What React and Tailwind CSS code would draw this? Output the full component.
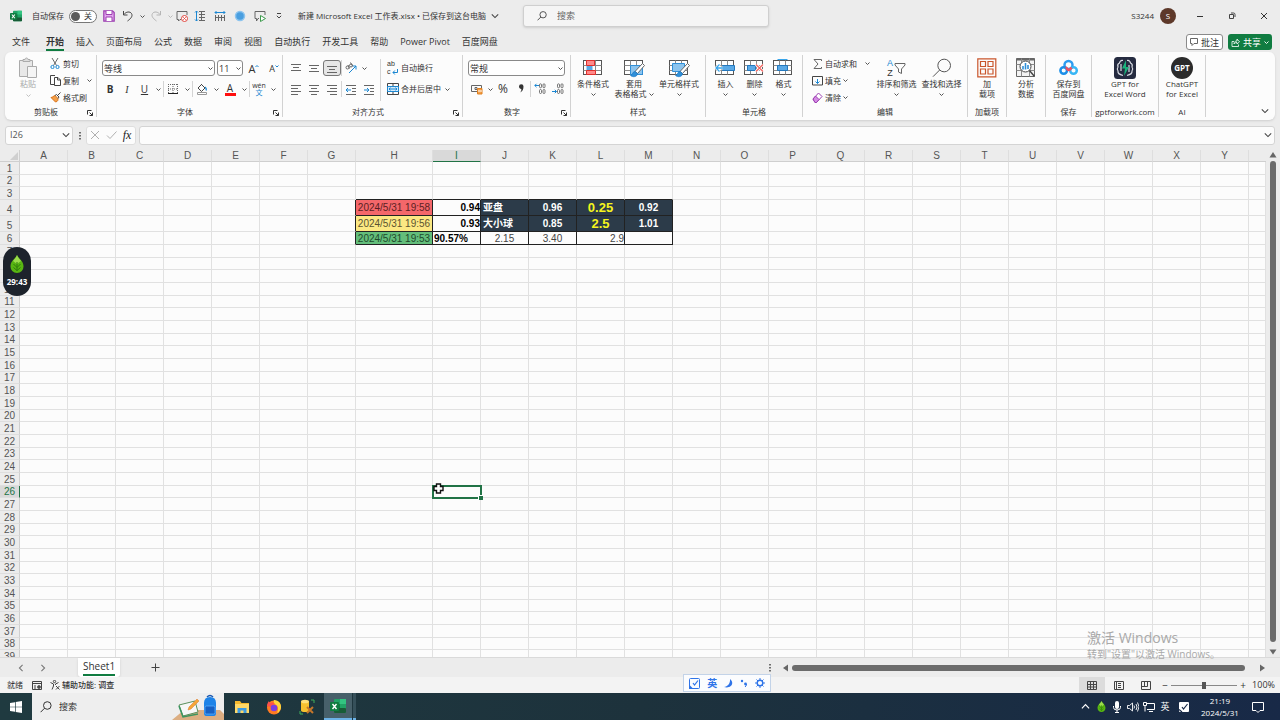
/**
 * Spreadsheet window — title bar, ribbon, formula bar, cell grid,
 * sheet tabs and status bar, with the desktop taskbar underneath.
 */

const UI_FONT = "font-['Open_Sans','Noto_Sans_CJK_SC',sans-serif]";
const CELL_FONT = "font-['Liberation_Sans','Noto_Sans_CJK_SC',sans-serif]";

const TABS = [
  "开始", "插入", "页面布局", "公式", "数据", "审阅", "视图",
  "自动执行", "开发工具", "帮助", "Power Pivot", "百度网盘",
];

const COLUMNS = "ABCDEFGHIJKLMNOPQRSTUVWXY".split("");
const ROWS = Array.from({ length: 39 }, (_, i) => i + 1);

const DARK = "bg-[#2c3b49] text-white font-bold text-center";

const CELLS = {
  H4: { text: "2024/5/31 19:58", style: "bg-[#f4676a] text-[#5a1f22] text-center" },
  I4: { text: "0.94", style: "text-black font-bold text-right" },
  J4: { text: "亚盘", style: "bg-[#2c3b49] text-white font-bold pl-[2px]" },
  K4: { text: "0.96", style: DARK },
  L4: { text: "0.25", style: "bg-[#2c3b49] text-[#f5f51d] font-bold text-center text-[13px]" },
  M4: { text: "0.92", style: DARK },
  H5: { text: "2024/5/31 19:56", style: "bg-[#fce883] text-[#5b5330] text-center" },
  I5: { text: "0.93", style: "text-black font-bold text-right" },
  J5: { text: "大小球", style: "bg-[#2c3b49] text-white font-bold pl-[2px]" },
  K5: { text: "0.85", style: DARK },
  L5: { text: "2.5", style: "bg-[#2c3b49] text-[#f5f51d] font-bold text-center text-[13px]" },
  M5: { text: "1.01", style: DARK },
  H6: { text: "2024/5/31 19:53", style: "bg-[#63be7b] text-[#1e4a2c] text-center" },
  I6: { text: "90.57%", style: "text-black font-bold pl-px" },
  J6: { text: "2.15", style: "text-[#444] text-center" },
  K6: { text: "3.40", style: "text-[#444] text-center" },
  L6: { text: "2.9", style: "text-[#444] text-right" },
  M6: { text: "", style: "" },
};

/* ── Small shared pieces ─────────────────────── */

function Svg({ w = 12, h = 12, box, className = "", children }) {
  return (
    <svg
      width={w}
      height={h}
      viewBox={box || `0 0 ${w} ${h}`}
      fill="none"
      stroke="#666"
      strokeWidth="1"
      className={`shrink-0 ${className}`}
      aria-hidden="true"
    >
      {children}
    </svg>
  );
}

function Chevron({ size = 5, color = "#444", className = "" }) {
  return (
    <svg width={size} height={size} viewBox="0 0 6 6" fill="none" className={`shrink-0 ${className}`} aria-hidden="true">
      <path d="M.6 1.8 3 4.2l2.4-2.4" stroke={color} strokeWidth={size > 6 ? 0.8 : 1.1} />
    </svg>
  );
}

function Drop({ label, className = "w-3" }) {
  return (
    <button aria-label={label} className={`flex h-4 items-center justify-center ${className}`}>
      <Chevron />
    </button>
  );
}

function IconButton({ label, className = "w-[18px]", children }) {
  return (
    <button aria-label={label} className={`flex h-4 shrink-0 items-center justify-center ${className}`}>
      {children}
    </button>
  );
}

function Divider() {
  return <span className="h-4 w-px shrink-0 bg-[#d4d4d4]" />;
}

function Combo({ label, value, className }) {
  return (
    <span className={`relative block ${className}`}>
      <select
        aria-label={label}
        className="block h-4 w-full appearance-none rounded-[3px] border border-[#8a8a8a] bg-white px-px text-[9px] leading-none text-[#333]"
      >
        <option>{value}</option>
      </select>
      <Chevron className="pointer-events-none absolute right-[2px] top-[6px]" />
    </span>
  );
}

function Group({ label, launcher, className, children }) {
  return (
    <section className={`flex h-[62px] shrink-0 flex-col border-r border-[#d2d2d2] ${className}`}>
      <div className="flex h-[51px] items-start">{children}</div>
      <div className="flex h-[11px] items-center">
        <span className="flex-1 whitespace-nowrap text-center text-[8px] leading-[11px]">{label}</span>
        {launcher && (
          <button aria-label={`${label}设置`} className="w-[9px] pt-[3px]">
            <Svg w={6} h={6}>
              <path d="M.5 4.500v-4h4M2.500 2.500l3 3M5.500 2.500v3h-3" stroke="#333" />
            </Svg>
          </button>
        )}
      </div>
    </section>
  );
}

function BigButton({ icon, lines, drop, dropInline, className }) {
  return (
    <button className={`flex shrink-0 flex-col items-center pt-[2px] text-[8px] leading-[10px] ${className}`}>
      <span className="flex h-[22px] items-center justify-center">{icon}</span>
      {lines.map((line, i) => (
        <span key={line} className="flex items-center gap-[2px] whitespace-nowrap">
          {line}
          {dropInline && i === lines.length - 1 && <Chevron />}
        </span>
      ))}
      {drop && <Chevron className="mt-[3px]" />}
    </button>
  );
}

function RowButton({ icon, text, drop, gap = "gap-[2px]" }) {
  return (
    <button className="flex h-[17px] items-center gap-[2px] whitespace-nowrap">
      <span className="flex w-3 justify-center">{icon}</span>
      <span className={`flex items-center ${gap}`}>
        {text}
        {drop && <Chevron />}
      </span>
    </button>
  );
}

/* ── Icons ───────────────────────────────────── */

function ExcelIcon({ w = 12 }) {
  return (
    <Svg w={w} h={w} box="0 0 16 16">
      <g stroke="none">
        <rect x="4" y="1" width="12" height="14" rx="1" fill="#21a366" />
        <rect x="10" y="1" width="6" height="5" fill="#33c481" />
        <rect x="4" y="6" width="6" height="5" fill="#107c41" />
        <rect x="4" y="10" width="12" height="5" rx="1" fill="#185c37" />
        <rect x="0" y="4" width="9" height="9" rx="1" fill="#107c41" />
      </g>
      <path d="m2.5 6 4 5m0-5-4 5" stroke="#fff" strokeWidth="1.4" />
    </Svg>
  );
}

function SearchIcon({ size = 12, color = "#555" }) {
  return (
    <Svg w={size} h={size} box="0 0 12 12">
      <circle cx="7.3" cy="4.5" r="3.8" stroke={color} vectorEffect="non-scaling-stroke" />
      <path d="M4.6 7.2.6 11.2" stroke={color} vectorEffect="non-scaling-stroke" />
    </Svg>
  );
}

function AlignIcon({ rows, align = "center" }) {
  const short = { left: [1, 8], center: [3, 9], right: [4, 11] }[align];
  return (
    <Svg w={12} h={11}>
      {rows.map((y, i) => (
        <path key={y} d={i % 2 ? `M${short[0]} ${y}.5h${short[1] - short[0]}` : `M1 ${y}.5h10`} />
      ))}
    </Svg>
  );
}

function IndentIcon({ d }) {
  return (
    <Svg w={12} h={11}>
      <path d="M1 1.5h10M7 4.5h4M7 7.5h4M1 10.5h10" />
      <path d={d} stroke="#1b87d2" />
    </Svg>
  );
}

function GridBase({ children }) {
  return (
    <Svg w={21} h={19}>
      <rect x=".5" y="1.5" width="18" height="14" fill="#fff" stroke="#555" />
      <path d="M6.500 1.500v14M12.500 1.500v14M.5 6.500h18M.5 11.500h18" stroke="#8a8a8a" />
      {children}
    </Svg>
  );
}

const BRUSH = (
  <g>
    <path d="M18.500 4.500 20.500 6.500 13.500 14.500 11 12.500z" fill="#fff" stroke="#666" />
    <path d="M11 12.500c-2.500 0-2 3-4.500 4 2 2 7 1.500 7-2z" fill="#2f8fd8" stroke="#1b78c4" strokeWidth=".7" />
  </g>
);

function DigitsIcon({ arrow }) {
  return (
    <Svg w={12} h={12}>
      <g strokeWidth=".9">
        <rect x="5.5" y=".8" width="2" height="4" rx="1" />
        <rect x="9" y=".8" width="2" height="4" rx="1" />
        <rect x="5.5" y="6.5" width="2" height="4" rx="1" />
        <rect x="9" y="6.5" width="2" height="4" rx="1" />
      </g>
      <path d={arrow} stroke="#1b87d2" />
    </Svg>
  );
}

function LeafIcon({ w, h }) {
  return (
    <Svg w={w} h={h} box="0 0 14 18">
      <path d="M7 0c1 3 6.500 6 6.500 11A6.500 6.500 0 0 1 7 18 6.500 6.500 0 0 1 .5 11C.5 6 6 3 7 0z" fill="#58b512" stroke="none" />
      <path d="M7 0c1 3 3 4 4 6L7 9 3 6c1-2 3-3 4-6z" fill="#9bdb4b" stroke="none" />
      <path d="M7 7v9M3.500 9 7 12.500 10.500 9M3.500 12.500 7 15.500l3.500-3" stroke="#2f7d0a" />
    </Svg>
  );
}

/* ── Title bar ───────────────────────────────── */

function TitleBar() {
  return (
    <header className="flex h-8 shrink-0 items-center text-[8px]">
      <div className="flex items-center pl-[10px]">
        <ExcelIcon />
        <label className="ml-[10px] flex items-center gap-[5px] whitespace-nowrap">
          自动保存
          <span className="relative flex h-[13px] w-7 items-center rounded-full border border-[#777] bg-white">
            <input type="checkbox" className="absolute inset-0 appearance-none" />
            <span className="ml-px size-[9px] rounded-full bg-[#5c5c5c]" />
            <span className="ml-1">关</span>
          </span>
        </label>
      </div>
      <div className="flex items-center pl-[3px]">
        <IconButton label="保存">
          <Svg>
            <path d="M.8.8h8.700l1.700 1.700v8.700H.8z" fill="#e3a5ee" stroke="#9b3fb0" strokeWidth="1.2" />
            <path d="M3 1v3.500h6V1" fill="#fff" stroke="#9b3fb0" />
            <path d="M3 11V7h6v4" fill="#fff" stroke="#9b3fb0" />
          </Svg>
        </IconButton>
        <IconButton label="撤消" className="w-5">
          <Svg>
            <path d="M1.500 1v4h4M1.700 4.700C4 1.500 8 1.200 9.500 3.500c1.500 2.500-.5 5-4 7.500" stroke="#444" />
          </Svg>
        </IconButton>
        <Drop label="撤消列表" className="w-2" />
        <IconButton label="恢复" className="w-5">
          <Svg>
            <path d="M10.500 1v4h-4M10.300 4.700C8 1.500 4 1.200 2.500 3.500 1 6 3 8.500 6.500 11" stroke="#b5b5b5" />
          </Svg>
        </IconButton>
        <IconButton label="恢复列表" className="w-2">
          <Chevron color="#b5b5b5" />
        </IconButton>
        <IconButton label="删除批注" className="w-4">
          <Svg>
            <path d="M5 9.500H4L2.500 11V9.500H1v-8h10V5" />
            <circle cx="8.500" cy="8.500" r="3" fill="#fff" stroke="#e0443c" />
            <path d="m7.300 7.300 2.400 2.400m0-2.400L7.300 9.700" stroke="#e0443c" />
          </Svg>
        </IconButton>
        <IconButton label="行高" className="w-5">
          <Svg>
            <path d="M2.500 1v10M1 2.500 2.500 1 4 2.500M1 9.500 2.500 11 4 9.500" stroke="#1b87d2" />
            <path d="M5 1.500h6M5 4.500h6M5 7.500h6M5 10.500h6M7.500 1.500v9" />
          </Svg>
        </IconButton>
        <IconButton label="列宽" className="w-5">
          <Svg>
            <path d="M1 2.500h10M2.500 1 1 2.500 2.500 4M9.500 1 11 2.500 9.500 4" stroke="#1b87d2" />
            <path d="M1.500 5v6M4.500 5v6M7.500 5v6M10.500 5v6M1.500 7.500h9" />
          </Svg>
        </IconButton>
        <IconButton label="形状" className="w-5">
          <Svg>
            <circle cx="6" cy="6" r="4.500" fill="#4a9fe0" stroke="#8dc4ee" strokeWidth="1.500" />
          </Svg>
        </IconButton>
        <IconButton label="演示" className="w-5">
          <Svg>
            <path d="M5 8.500H4L2.500 11V8.500H1v-7h10V5" />
            <path d="m6.500 5.500 5 3-5 3z" fill="#fff" stroke="#3b9a4b" />
          </Svg>
        </IconButton>
        <IconButton label="自定义快速访问工具栏">
          <Svg w={6} h={6}>
            <path d="M1 .5h4M.8 2.800 3 5l2.200-2.200" stroke="#444" />
          </Svg>
        </IconButton>
      </div>
      <button className="ml-[10px] flex items-center gap-[5px] whitespace-nowrap">
        新建 Microsoft Excel 工作表.xlsx • 已保存到这台电脑
        <Chevron size={8} />
      </button>
      <label className="ml-6 flex h-[22px] w-[246px] items-center gap-[10px] rounded-[3px] border border-[#cfcfcf] bg-[#f5f5f5] pl-[13px] shadow-sm">
        <SearchIcon size={10} />
        <input
          type="text"
          placeholder="搜索"
          className="min-w-0 flex-1 bg-transparent text-[9px] outline-none placeholder:text-[#666]"
        />
      </label>
      <div className="ml-auto flex items-center">
        <span className="text-[8px]">S3244</span>
        <button className="ml-[6px] flex size-4 items-center justify-center rounded-full bg-[#5d3829] text-[8px] text-white">
          S
        </button>
        <IconButton label="最小化" className="ml-2 w-8">
          <Svg w={8} h={8}>
            <path d="M1 4.500h6" stroke="#333" />
          </Svg>
        </IconButton>
        <IconButton label="还原" className="w-8">
          <Svg w={8} h={8}>
            <path d="M1.500 2.500h4v4h-4zM3 1h2.500Q7 1 7 2.500V5" stroke="#444" />
          </Svg>
        </IconButton>
        <IconButton label="关闭" className="w-8">
          <Svg w={8} h={8}>
            <path d="m1 1 6 6m0-6L1 7" stroke="#333" />
          </Svg>
        </IconButton>
      </div>
    </header>
  );
}

function TabBar() {
  return (
    <nav className="flex h-5 shrink-0 items-center pl-3 text-[9px]">
      <button className="mr-4">文件</button>
      <div className="flex h-full items-center gap-3">
        {TABS.map((tab, i) => (
          <button
            key={tab}
            className={`h-[18px] whitespace-nowrap border-b-2 pt-[2px] ${
              i === 0 ? "border-[#107c41] font-bold" : "border-transparent"
            }`}
          >
            {tab}
          </button>
        ))}
      </div>
      <button className="ml-auto flex h-4 items-center gap-[3px] rounded-[3px] border border-[#8a8a8a] bg-white px-[3px] leading-none">
        <Svg w={8} h={8}>
          <path d="M.5 .5h7v5H4L2 7.500v-2H.5z" />
        </Svg>
        批注
      </button>
      <button className="ml-[5px] mr-2 flex h-4 items-center gap-[3px] rounded-[3px] bg-[#107c41] px-[3px] leading-none text-white">
        <Svg w={9} h={9}>
          <path d="M3 3.500H1v5h6.500v-2M3 6c0-2 1-3 3-3V1l2.500 2.800L6 6V4.500C4.500 4.500 3.500 5 3 6z" stroke="#fff" strokeWidth=".8" />
        </Svg>
        共享
        <Chevron color="#fff" />
      </button>
    </nav>
  );
}

/* ── Ribbon ──────────────────────────────────── */

function ClipboardGroup() {
  return (
    <Group label="剪贴板" launcher className="w-[92px] text-[8px]">
      <button className="ml-3 flex w-[22px] flex-col items-center pt-[2px] leading-[10px] text-[#aaa]">
        <Svg w={20} h={22}>
          <path d="M1.500 3.500h13v16h-13z" fill="#e8e8e8" stroke="#aaa" />
          <path d="M5 4.500v-2h2c0-2 3-2 3 0h2v2z" fill="#ddd" stroke="#aaa" />
          <path d="M9.500 9.500h9v11h-9z" fill="#f5f5f5" stroke="#aaa" />
        </Svg>
        粘贴
        <Chevron color="#bbb" className="mt-1" />
      </button>
      <div className="ml-[10px] flex flex-col">
        <RowButton
          text="剪切"
          icon={
            <Svg w={10} h={11}>
              <path d="m2 0 4.500 7.500M8 0 3.500 7.500" />
              <circle cx="2.500" cy="9" r="1.600" stroke="#1b87d2" />
              <circle cx="7.500" cy="9" r="1.600" stroke="#1b87d2" />
            </Svg>
          }
        />
        <RowButton
          text="复制"
          drop
          gap="gap-2"
          icon={
            <Svg w={11} h={11}>
              <path d="M4 9.500H.5v-9H5" stroke="#444" />
              <path d="M4.500 2.500h3.500l2.500 2.500v5.500h-6zM7.500 2.500V5h3" fill="#fff" stroke="#444" />
            </Svg>
          }
        />
        <RowButton
          text="格式刷"
          icon={
            <Svg w={11} h={11}>
              <path d="M1 5.500 5.500 10C8 9.500 8 8 8 6.500L5 3.500C3.500 4 2.500 5.500 1 5.500z" fill="#f3a04a" stroke="#d9731a" />
              <path d="m5 3.500 1.500-1 2.500 2.500-1 1.500M7.500 3.500l3-3" stroke="#444" />
            </Svg>
          }
        />
      </div>
    </Group>
  );
}

function FontGroup() {
  return (
    <Group label="字体" launcher className="w-[186px]">
      <div className="pl-[5px] pt-[5px]">
        <div className="flex h-4 items-center gap-[2px]">
          <Combo label="字体名称" value="等线" className="w-[113px]" />
          <Combo label="字号" value="11" className="w-[26px]" />
          <IconButton label="增大字号">
            <span className="text-[11px] leading-none">A</span>
            <Svg w={4} h={8}>
              <path d="M.5 3 2 1.500 3.500 3" stroke="#1b87d2" />
            </Svg>
          </IconButton>
          <IconButton label="减小字号">
            <span className="text-[9px] leading-none">A</span>
            <Svg w={4} h={8}>
              <path d="M.5 1.500 2 3l1.500-1.500" stroke="#1b87d2" />
            </Svg>
          </IconButton>
        </div>
        <div className="mt-[5px] flex h-4 items-center text-[10px]">
          <button className="w-4 font-bold">B</button>
          <button className="w-[18px] font-['Liberation_Serif',serif] italic">I</button>
          <button className="w-[17px] underline">U</button>
          <Drop label="下划线" className="w-[10px]" />
          <Divider />
          <IconButton label="边框">
            <Svg>
              <path d="M1.500 1v9M6 1v9M10.500 1v9M1 1.500h10M1 6h10" strokeDasharray="1 1" />
              <path d="M1 10.500h10" stroke="#222" />
            </Svg>
          </IconButton>
          <Drop label="边框列表" className="w-[10px]" />
          <Divider />
          <IconButton label="填充颜色">
            <Svg>
              <path d="M5 1 9 5 5.500 8.500 2 5 6 1" stroke="#444" />
              <path d="M9 4c1.500 1 1.500 2 1.200 3.500" stroke="#1b87d2" strokeWidth="1.400" />
              <path d="M1.500 9.500h9v2h-9z" fill="#fff" stroke="#999" />
            </Svg>
          </IconButton>
          <Drop label="填充颜色列表" className="w-[10px]" />
          <button className="flex w-[18px] flex-col items-center text-[10px] leading-[10px]">
            A
            <span className="h-[3px] w-[11px] bg-[#ff1010]" />
          </button>
          <Drop label="字体颜色列表" className="w-[10px]" />
          <Divider />
          <button className="flex w-[18px] flex-col items-center text-[7px] leading-[7px]">
            wén
            <span className="text-[#1b87d2]">文</span>
          </button>
          <Drop label="拼音列表" className="w-[10px]" />
        </div>
      </div>
    </Group>
  );
}

function AlignGroup() {
  return (
    <Group label="对齐方式" launcher className="w-[180px] text-[8px]">
      <div className="pl-1 pt-[5px]">
        <div className="flex h-4 items-center">
          <IconButton label="顶端对齐">
            <AlignIcon rows={[1, 4, 7]} />
          </IconButton>
          <IconButton label="垂直居中">
            <AlignIcon rows={[2, 5, 8]} />
          </IconButton>
          <button aria-label="底端对齐" className="flex h-4 w-[18px] items-center justify-center rounded-[3px] border border-[#777] bg-[#e6e6e6]">
            <AlignIcon rows={[3, 6, 9]} />
          </button>
          <Divider />
          <IconButton label="方向">
            <Svg>
              <path d="m4 11 7-7M11 7.500V4H7.500" stroke="#1b87d2" />
              <circle cx="2.500" cy="5.500" r="1.500" />
              <circle cx="6" cy="3.500" r="1.500" />
              <path d="m3 3 1.500 3.500M5.500.500 7.500 4" />
            </Svg>
          </IconButton>
          <Drop label="方向列表" className="w-2" />
        </div>
        <div className="mt-[5px] flex h-4 items-center">
          <IconButton label="左对齐">
            <AlignIcon rows={[1, 4, 7, 10]} align="left" />
          </IconButton>
          <IconButton label="居中">
            <AlignIcon rows={[1, 4, 7, 10]} />
          </IconButton>
          <IconButton label="右对齐">
            <AlignIcon rows={[1, 4, 7, 10]} align="right" />
          </IconButton>
          <Divider />
          <IconButton label="减少缩进量">
            <IndentIcon d="M6 6H1m2-2L1 6l2 2" />
          </IconButton>
          <IconButton label="增加缩进量">
            <IndentIcon d="M1 6h5M4 4l2 2-2 2" />
          </IconButton>
        </div>
      </div>
      <div className="ml-[2px] mt-1 h-[42px] w-px bg-[#d4d4d4]" />
      <div className="pl-[6px] pt-[5px]">
        <button className="flex h-4 items-center gap-[2px] whitespace-nowrap">
          <span className="relative flex h-4 w-3 flex-col items-start text-[7px] leading-[8px]">
            <span className="font-['Liberation_Sans',sans-serif]">ab</span>
            <span className="font-['Liberation_Sans',sans-serif]">c</span>
            <svg width="7" height="6" viewBox="0 0 7 6" fill="none" className="absolute bottom-px right-0" aria-hidden="true">
              <path d="M5.500 0v3.500H1M2.800 1.500 1 3.500l1.800 2" stroke="#1b87d2" />
            </svg>
          </span>
          自动换行
        </button>
        <div className="mt-[5px] flex h-4 items-center">
          <button className="flex items-center gap-[2px] whitespace-nowrap">
            <Svg>
              <path d="M.5 .5h11v11H.5zM6 .5v3M6 8.500v3" stroke="#444" />
              <path d="M.5 3.500h11v5H.5z" fill="#d6ebfa" stroke="#1b87d2" />
              <path d="M2 6h8M3.500 4.700 2 6l1.500 1.300M8.500 4.700 10 6 8.500 7.300" stroke="#1b87d2" />
            </Svg>
            合并后居中
          </button>
          <Drop label="合并列表" className="ml-1" />
        </div>
      </div>
    </Group>
  );
}

function NumberGroup() {
  return (
    <Group label="数字" launcher className="w-[108px]">
      <div className="pl-[5px] pt-[5px]">
        <Combo label="数字格式" value="常规" className="w-[97px]" />
        <div className="mt-[5px] flex h-4 items-center">
          <IconButton label="会计数字格式">
            <Svg>
              <path d="M.5 2.500h10v6H.5zM4 4.500h2v2H4z" />
              <path d="M6.500 5.500h4.500v5.500H6.500z" fill="#f3a04a" stroke="#e0801f" />
              <path d="M7 8h4" stroke="#fff" />
            </Svg>
          </IconButton>
          <Drop label="会计格式列表" className="w-2" />
          <button className="w-[18px] text-[12px] leading-none">%</button>
          <IconButton label="千位分隔样式">
            <Svg>
              <path d="M4 3.500a2 2 0 1 1 4.500 0c0 3-1 5-3.500 6 1-1 1.500-2 1.300-3.500-1.300 0-2.300-1-2.300-2.500z" fill="#333" stroke="none" />
            </Svg>
          </IconButton>
          <Divider />
          <IconButton label="增加小数位数">
            <DigitsIcon arrow="M5 2.500H.8M2.500 .8.8 2.500l1.700 1.700" />
          </IconButton>
          <IconButton label="减少小数位数">
            <DigitsIcon arrow="M0 8.500h4.500M2.800 6.800l1.700 1.700-1.700 1.700" />
          </IconButton>
        </div>
      </div>
    </Group>
  );
}

function StyleGroup() {
  return (
    <Group label="样式" className="w-[135px]">
      <BigButton
        className="ml-px w-[42px]"
        lines={["条件格式"]}
        drop
        icon={
          <GridBase>
            <path d="M3.500 1.500h8v5h-8zM3.500 11.500h9v4h-9z" fill="#ff8a8a" stroke="#e0302d" />
            <path d="M3.500 7h6v4h-6z" fill="#5aa9e6" stroke="none" />
          </GridBase>
        }
      />
      <BigButton
        className="w-10"
        lines={["套用", "表格格式"]}
        dropInline
        icon={
          <GridBase>
            <path d="M6.500 6.500h12v9h-12z" fill="#8cc4ee" stroke="#2f8fd8" />
            {BRUSH}
          </GridBase>
        }
      />
      <BigButton
        className="w-[50px]"
        lines={["单元格样式"]}
        drop
        icon={
          <GridBase>
            <path d="M3.500 4.500h12v8h-12z" fill="#8cc4ee" stroke="#2f8fd8" />
            {BRUSH}
          </GridBase>
        }
      />
    </Group>
  );
}

function CellsGroup() {
  return (
    <Group label="单元格" className="w-[97px]">
      <BigButton
        className="ml-[5px] w-[29px]"
        lines={["插入"]}
        drop
        icon={
          <GridBase>
            <path d="M7.500 6.500h12v5h-12z" fill="#5aa9e6" stroke="#2377bd" />
            <path d="M8 9H1M4.500 5.500 1 9l3.500 3.500" stroke="#fff" strokeWidth="3" />
            <path d="M8 9H1M4.500 5.500 1 9l3.500 3.500" stroke="#39a5ea" strokeWidth="1.300" />
          </GridBase>
        }
      />
      <BigButton
        className="w-[29px]"
        lines={["删除"]}
        drop
        icon={
          <GridBase>
            <path d="M3.500 6.500h8v5h-8z" fill="#5aa9e6" stroke="#2377bd" />
            <path d="m12 5.500 7 7m0-7-7 7" stroke="#fff" strokeWidth="3" />
            <path d="m12 5.500 7 7m0-7-7 7" stroke="#f0645f" strokeWidth="1.200" />
          </GridBase>
        }
      />
      <BigButton
        className="w-[29px]"
        lines={["格式"]}
        drop
        icon={
          <GridBase>
            <path d="M4.500 6.500h10v5h-10z" fill="#5aa9e6" stroke="#2377bd" />
            <path d="M4.500 0h10" stroke="#39a5ea" strokeWidth="2" />
          </GridBase>
        }
      />
    </Group>
  );
}

function EditGroup() {
  return (
    <Group label="编辑" className="w-[165px] text-[8px]">
      <div className="flex w-[71px] flex-col pl-2">
        <RowButton
          text="自动求和"
          drop
          gap="gap-2"
          icon={
            <Svg w={9} h={10}>
              <path d="M8.500 2V.5H1L5 5 1 9.500h7.500V8" />
            </Svg>
          }
        />
        <RowButton
          text="填充"
          drop
          icon={
            <Svg w={11} h={11}>
              <path d="M.5 1.500h10v8.500H.5z" stroke="#444" />
              <path d="M5.500 4v4.500M3.500 6.500l2 2 2-2" stroke="#1b87d2" />
            </Svg>
          }
        />
        <RowButton
          text="清除"
          drop
          icon={
            <Svg w={11} h={11}>
              <path d="m1 7 5.500-6L10 4.500 4.500 10.500H3z" fill="#fff" stroke="#9b3fb0" />
              <path d="m1 7 2.500-3L7 7.500l-2.500 3H3z" fill="#d58be4" stroke="#9b3fb0" />
            </Svg>
          }
        />
      </div>
      <BigButton
        className="w-[45px]"
        lines={["排序和筛选"]}
        drop
        icon={
          <span className="flex items-center gap-px">
            <span className="flex flex-col font-['Liberation_Sans',sans-serif] text-[9px] leading-[10px]">
              <span className="text-[#1b87d2]">A</span>
              <span>Z</span>
            </span>
            <Svg w={12} h={14}>
              <path d="M1 2.500h10v1.500L7.500 8v4.500l-3-1.500V8L1 4z" />
            </Svg>
          </span>
        }
      />
      <BigButton className="w-[45px]" lines={["查找和选择"]} drop icon={<SearchIcon size={20} />} />
    </Group>
  );
}

function AddInGroups() {
  return (
    <>
      <Group label="加载项" className="w-[39px]">
        <BigButton
          className="w-full"
          lines={["加", "载项"]}
          icon={
            <Svg w={20} h={20}>
              <path d="M.8.8h18v18H.8zM3.500 3.500h5v5h-5zM11 3.500h5v5h-5zM3.500 11h5v5h-5zM11 11h5v5h-5z" stroke="#c9562c" strokeWidth="1.200" />
            </Svg>
          }
        />
      </Group>
      <Group label="" className="w-[39px]">
        <BigButton
          className="w-full"
          lines={["分析", "数据"]}
          icon={
            <Svg w={20} h={20}>
              <path d="M.5 .5h18v18H.5z" fill="#f3f3f3" />
              <path d="M.5 1.500h18" stroke="#666" strokeWidth="2" />
              <path d="M.5 6.500h18M.5 12.500h18M5.500 .5v18M13.500 .5v18" stroke="#8a8a8a" />
              <circle cx="9.500" cy="8.500" r="5.500" fill="#fff" stroke="#444" />
              <path d="m13.500 12.500 5 6" stroke="#444" strokeWidth="1.400" />
              <path d="M7 8v3.500M9.500 5v6.500M12 7v4" stroke="#2f8fd8" strokeWidth="1.600" />
            </Svg>
          }
        />
      </Group>
      <Group label="保存" className="w-[46px]">
        <BigButton
          className="w-full"
          lines={["保存到", "百度网盘"]}
          icon={
            <Svg w={20} h={18}>
              <circle cx="9.500" cy="6" r="4" stroke="#2d9cf0" strokeWidth="2.500" />
              <circle cx="4.700" cy="11.500" r="3.300" stroke="#1b8fe8" strokeWidth="2.500" />
              <circle cx="14.500" cy="11.500" r="3.300" stroke="#38b6f5" strokeWidth="2.500" />
              <path d="M6.500 8.500c1.500 0 2 2.500 3 2.500s2-1 3-2.500" stroke="#ef4f62" strokeWidth="2.500" />
            </Svg>
          }
        />
      </Group>
      <Group label="gptforwork.com" className="w-[67px]">
        <BigButton
          className="w-full"
          lines={["GPT for", "Excel Word"]}
          icon={
            <Svg w={22} h={22}>
              <rect width="22" height="22" rx="3.500" fill="#252b40" stroke="none" />
              <path d="M9 3.500C6 3 5.500 6 5.500 6 3 7 4 10 4 10c-1.500 2 0 4 0 4-.5 3 3 4 5 4.500M13 3.500c3-.5 3.500 2.500 3.500 2.500 2.500 1 1.500 4 1.500 4 1.500 2 0 4 0 4 .5 3-3 4-5 4.500M7 7v7M15 8v7" stroke="#d7dbe2" strokeWidth="1.200" />
              <path d="M12 3 8 11.500h3L10 19l5-9h-3z" fill="#19b27b" stroke="none" />
            </Svg>
          }
        />
      </Group>
      <Group label="AI" className="w-[47px]">
        <BigButton
          className="w-full"
          lines={["ChatGPT", "for Excel"]}
          icon={
            <span className="flex size-[22px] items-center justify-center rounded-full bg-[#2b2b2b] text-[8px] font-bold text-white">
              GPT
            </span>
          }
        />
      </Group>
    </>
  );
}

function Ribbon() {
  return (
    <div className="mx-[5px] flex h-[68px] shrink-0 items-center overflow-hidden rounded-[6px] bg-[#fcfcfc] shadow">
      <ClipboardGroup />
      <FontGroup />
      <AlignGroup />
      <NumberGroup />
      <StyleGroup />
      <CellsGroup />
      <EditGroup />
      <AddInGroups />
      <button aria-label="折叠功能区" className="ml-auto mr-[6px] self-end pb-[5px]">
        <Chevron size={8} />
      </button>
    </div>
  );
}

/* ── Formula bar ─────────────────────────────── */

function FormulaBar() {
  return (
    <div className="flex h-[30px] shrink-0 items-center px-[5px]">
      <div className="flex h-[19px] w-[68px] items-center rounded-[3px] border border-[#d4d4d4] bg-[#fcfcfc] pr-[2px]">
        <input aria-label="名称框" defaultValue="I26" className="min-w-0 flex-1 bg-transparent pl-1 text-[9px] text-[#555] outline-none" />
        <Chevron size={8} />
      </div>
      <Svg w={13} h={9}>
        <path d="M7 1v8" stroke="#444" strokeWidth="1.500" strokeDasharray="1.500 1.500" />
      </Svg>
      <div className="flex h-[19px] w-[50px] items-center justify-around rounded-[3px] border border-[#dedede] bg-[#fcfcfc]">
        <IconButton label="取消" className="w-4">
          <Svg w={10} h={10}>
            <path d="m1 1 8 8m0-8L1 9" stroke="#b0b0b0" />
          </Svg>
        </IconButton>
        <IconButton label="输入" className="w-4">
          <Svg w={11} h={10}>
            <path d="m1 5.500 3 3 6.500-7" stroke="#b0b0b0" />
          </Svg>
        </IconButton>
        <button className="w-4 font-['Liberation_Serif',serif] text-[12px] italic leading-none text-[#222]">fx</button>
      </div>
      <div className="ml-[3px] flex h-[19px] flex-1 items-center rounded-[3px] border border-[#d4d4d4] bg-[#fcfcfc] pr-[2px]">
        <input aria-label="编辑栏" className="min-w-0 flex-1 bg-transparent px-1 text-[9px] outline-none" />
        <Chevron size={8} />
      </div>
    </div>
  );
}

/* ── Grid ────────────────────────────────────── */

function rowHeight(row) {
  if (row === 4 || row === 5) return "h-4";
  return row % 3 === 2 ? "h-3" : "h-[13px]";
}

function cellBorder(col, row) {
  const inCols = col >= "H" && col <= "M";
  const bottom = inCols && row >= 3 && row <= 6;
  const right = row >= 4 && row <= 6 && col >= "G" && col <= "M";
  return `${right ? "border-r-[#222]" : "border-r-[#e1e1e1]"} ${bottom ? "border-b-[#222]" : "border-b-[#e1e1e1]"}`;
}

function Selection() {
  return (
    <>
      <span className="absolute -bottom-[2px] -left-px -right-[2px] -top-px border-2 border-[#217346]" />
      <span className="absolute -bottom-[3px] -right-[3px] size-[5px] border-l border-t border-white bg-[#217346]" />
      <Svg w={11} h={11} className="absolute -top-[3px] left-0">
        <path d="M3.500 1h4v2.500H10v4H7.500V10h-4V7.500H1v-4h2.500z" fill="#fff" stroke="#111" strokeWidth="1.400" />
      </Svg>
    </>
  );
}

function Grid() {
  return (
    <div className="flex min-h-0 flex-1">
      <div className={`relative min-w-0 flex-1 overflow-hidden ${CELL_FONT}`}>
        <table className="w-full table-fixed border-separate border-spacing-0 text-[10px] leading-[11px] text-[#555]">
          <colgroup>
            <col className="w-5" />
            {COLUMNS.map((col) => (
              <col key={col} className={col === "H" ? "w-[77px]" : "w-12"} />
            ))}
            <col />
          </colgroup>
          <thead>
            <tr className="h-3">
              <th className="border-b border-r border-[#cfcfcf] p-0">
                <Svg w={8} h={8} className="ml-auto mr-px">
                  <path d="M8 0v8H0z" fill="#cfcfcf" stroke="none" />
                </Svg>
              </th>
              {COLUMNS.map((col) => (
                <th
                  key={col}
                  className={`border-b border-r p-0 font-normal ${
                    col === "I"
                      ? "border-b-[#217346] border-r-[#cfcfcf] bg-[#d9d9d9] text-[#217346]"
                      : "border-b-[#cfcfcf] border-r-[#dedede]"
                  }`}
                >
                  {col}
                </th>
              ))}
              <th className="border-b border-[#cfcfcf] p-0" />
            </tr>
          </thead>
          <tbody>
            {ROWS.map((row) => (
              <tr key={row} className={rowHeight(row)}>
                <th
                  className={`border-b border-r border-b-[#dedede] p-0 align-bottom font-normal ${
                    row === 26 ? "border-r-[#217346] bg-[#d9d9d9] text-[#217346]" : "border-r-[#cfcfcf]"
                  }`}
                >
                  {row}
                </th>
                {COLUMNS.map((col) => {
                  const cell = CELLS[col + row];
                  const selected = col === "I" && row === 26;
                  return (
                    <td
                      key={col}
                      className={`whitespace-nowrap border-b border-r p-0 ${cellBorder(col, row)} ${
                        cell ? cell.style : ""
                      } ${cell && cell.style.includes("bg-") ? "" : "bg-[#fcfcfc]"} ${selected ? "relative" : ""}`}
                    >
                      {cell && cell.text}
                      {selected && <Selection />}
                    </td>
                  );
                })}
                <td className="border-b border-r border-[#e1e1e1] bg-[#fcfcfc] p-0" />
              </tr>
            ))}
          </tbody>
        </table>
      </div>
      <div className="flex w-[14px] flex-col items-center gap-[3px] py-[2px]">
        <Svg w={8} h={6}>
          <path d="m4 0 3.500 5.500h-7z" fill="#666" stroke="none" />
        </Svg>
        <span className="mb-1 w-[6px] flex-1 rounded-full bg-[#6b6b6b]" />
        <Svg w={8} h={6}>
          <path d="m4 5.500 3.500-5h-7z" fill="#666" stroke="none" />
        </Svg>
      </div>
    </div>
  );
}

/* ── Sheet tabs and status bar ───────────────── */

function SheetBar() {
  return (
    <div className="flex h-5 shrink-0 items-center border-t border-[#dadada]">
      <div className="flex w-[60%] items-center self-stretch">
        <IconButton label="上一张" className="ml-3 w-[18px]">
          <Chevron size={8} color="#777" className="rotate-90" />
        </IconButton>
        <IconButton label="下一张" className="ml-1 w-[18px]">
          <Chevron size={8} color="#777" className="-rotate-90" />
        </IconButton>
        <button className="ml-[26px] h-[19px] self-start rounded-b-[3px] bg-white px-[5px] text-[10px] shadow-sm">
          <span className="block border-b-2 border-[#107c41] leading-[15px]">Sheet1</span>
        </button>
        <IconButton label="新工作表" className="ml-[26px] w-[18px]">
          <Svg w={9} h={9}>
            <path d="M4.500 .5v8M.5 4.500h8" stroke="#444" />
          </Svg>
        </IconButton>
      </div>
      <div className="flex flex-1 items-center pr-[14px]">
        <Svg w={4} h={9}>
          <path d="M2 1v8" stroke="#444" strokeWidth="1.500" strokeDasharray="1.500 1.500" />
        </Svg>
        <Svg w={7} h={8} className="ml-[10px]">
          <path d="M1 4 6 .5v7z" fill="#666" stroke="none" />
        </Svg>
        <span className="ml-[3px] mr-[14px] h-[6px] flex-1 rounded-full bg-[#6b6b6b]" />
        <Svg w={7} h={8}>
          <path d="M6 4 1 .5v7z" fill="#666" stroke="none" />
        </Svg>
      </div>
    </div>
  );
}

function StatusBar() {
  return (
    <footer className="flex h-4 shrink-0 items-center bg-[#f3f3f3] text-[8px]">
      <span className="ml-[7px]">就绪</span>
      <IconButton label="录制宏" className="ml-[9px]">
        <Svg w={10} h={9}>
          <path d="M.5 .5h9v8h-9zM.5 2.500h9M2 5h2M2 7h2" stroke="#444" />
          <circle cx="7" cy="6" r="1.500" fill="#444" />
        </Svg>
      </IconButton>
      <button className="ml-2 flex items-center gap-[2px] whitespace-nowrap font-medium">
        <Svg w={10} h={10}>
          <circle cx="4.500" cy="1.500" r="1.200" stroke="#444" />
          <path d="M.5 2.500 3.500 4v2L2 9.500M8.500 2.500 5.500 4v1M6 6l3.500 3.500M9.500 6 6 9.500" stroke="#444" />
        </Svg>
        辅助功能: 调查
      </button>
      <div className="ml-auto flex items-center">
        <button aria-label="普通" className="flex h-4 w-[26px] items-center justify-center bg-[#dcdcdc]">
          <Svg w={10} h={9}>
            <path d="M.5 .5h9v8h-9zM3.500 .5v8M6.500 .5v8M.5 3.500h9M.5 6h9" stroke="#444" />
          </Svg>
        </button>
        <IconButton label="页面布局" className="w-[27px]">
          <Svg w={10} h={9}>
            <path d="M.5 .5h9v8h-9zM2.500 .5v8M4 2.500h3M4 4.500h3M4 6.500h3" stroke="#444" />
          </Svg>
        </IconButton>
        <IconButton label="分页预览" className="w-[27px]">
          <Svg w={10} h={9}>
            <path d="M.5 .5h9v8h-9zM.5 5.500h6v-5M3.500 .5v5" stroke="#444" />
          </Svg>
        </IconButton>
        <button className="w-3 text-[10px] leading-none">−</button>
        <input
          type="range"
          aria-label="缩放"
          className="h-3 w-[66px] appearance-none bg-[linear-gradient(#888,#888)] bg-[length:100%_1px] bg-center bg-no-repeat [&::-webkit-slider-thumb]:h-[7px] [&::-webkit-slider-thumb]:w-1 [&::-webkit-slider-thumb]:appearance-none [&::-webkit-slider-thumb]:bg-[#555]"
        />
        <button className="w-3 text-[10px] leading-none">+</button>
        <span className="ml-[3px] mr-[5px] text-[9px]">100%</span>
      </div>
    </footer>
  );
}

/* ── Taskbar ─────────────────────────────────── */

function Taskbar() {
  return (
    <div className="flex h-[27px] shrink-0 items-center bg-linear-to-r from-[#1f3a40] via-[#1d323c] to-[#182947] text-[9px] text-white">
      <button aria-label="开始菜单" className="flex h-full w-8 items-center justify-center">
        <Svg w={12} h={12}>
          <path d="M0 2 5 1.200V5.700H0zM5.700 1 12 0v5.700H5.700zM0 6.300h5v4.500L0 10zM5.700 6.300H12V12l-6.300-1z" fill="#fff" stroke="none" />
        </Svg>
      </button>
      <label className="flex h-full w-48 items-center gap-[7px] bg-[#eee] pl-2 text-[#333]">
        <SearchIcon size={12} color="#333" />
        <input type="text" placeholder="搜索" className="w-[90px] bg-transparent outline-none placeholder:text-[#333]" />
        <Svg w={52} h={27} className="ml-auto">
          <path d="M0 27 12 17h36l4 4v6z" fill="#dcae82" stroke="none" />
          <path d="m7 12 16-4 3 11-15 4z" fill="#f7f7f7" stroke="#5b8f5c" />
          <path d="m7 13 4 11 15-3" stroke="#3b9560" strokeWidth="1.500" />
          <path d="m17 14 8-8 2 2-8 8-3 1z" fill="#f6a636" stroke="#d87830" strokeWidth=".5" />
          <path d="M35 4q3-3 6 0" stroke="#1857b0" strokeWidth="1.500" />
          <path d="M32 10q0-6 6-6t6 6v10q0 3-2 3h-8q-2 0-2-3z" fill="#1d83e8" stroke="none" />
          <rect x="33" y="13" width="10" height="8" rx="1.500" fill="#1560c4" stroke="#63b4ff" strokeWidth=".7" />
        </Svg>
      </label>
      <button aria-label="文件资源管理器" className="ml-[2px] flex h-full w-8 items-center justify-center">
        <Svg w={16} h={14}>
          <path d="M1 1h5l1.500 2H15v10H1z" fill="#f5b92e" stroke="none" />
          <path d="M1 4h14v9H1z" fill="#ffd968" stroke="none" />
          <path d="M3.500 13V8h9v5h-3v-2.500h-3V13z" fill="#3d9be2" stroke="none" />
        </Svg>
      </button>
      <button aria-label="火狐浏览器" className="flex h-full w-8 items-center justify-center">
        <Svg w={16} h={16}>
          <circle cx="8" cy="8.500" r="7" fill="#ff7a22" stroke="none" />
          <path d="M8 1c5 0 7.500 4 7 8-1 3-2 4-4 5 2-4 1-7-1-8-1-1-3-3-2-5z" fill="#ffd43a" stroke="none" />
          <path d="M1 7c0-2 1-4 2-5 0 1 1 2 2 2 2-1 3 0 3 1L5 8z" fill="#ff4f4a" stroke="none" />
          <circle cx="8" cy="9" r="3.300" fill="#7a3fe0" stroke="none" />
        </Svg>
      </button>
      <button aria-label="数据库工具" className="flex h-full w-[34px] items-center justify-center">
        <Svg w={16} h={16}>
          <path d="M2 2.500v9c0 2 8 2 8 0v-9z" fill="#f6c02f" stroke="none" />
          <ellipse cx="6" cy="2.500" rx="4" ry="1.800" fill="#ffe07a" stroke="none" />
          <path d="M12 1h3v3M1 12v3h3" stroke="#3fae5a" />
          <path d="m8 8 6 6m0-6-6 6" stroke="#c5762a" strokeWidth="2" />
        </Svg>
      </button>
      <button aria-label="电子表格" className="flex h-full w-7 items-center justify-center border-b-2 border-[#6cb2e6] bg-[#47606a]">
        <ExcelIcon w={16} />
      </button>
      <span className="ml-px h-full w-[3px] border-b-2 border-[#6cb2e6] bg-[#36505a]" />

      {/* Tray */}
      <div className="ml-auto flex items-center">
        <IconButton label="显示隐藏的图标" className="w-4">
          <Chevron size={9} color="#fff" className="rotate-180" />
        </IconButton>
        <IconButton label="计时器" className="w-4">
          <LeafIcon w={9} h={11} />
        </IconButton>
        <IconButton label="麦克风" className="w-4">
          <Svg w={8} h={12}>
            <rect x="2" y="0" width="4" height="8" rx="2" fill="#fff" stroke="none" />
            <path d="M.5 5v1.500Q.5 9 4 9t3.500-2.500V5M4 9v2.500M2 11.500h4" stroke="#fff" />
          </Svg>
        </IconButton>
        <IconButton label="音量" className="w-4">
          <Svg w={12} h={10}>
            <path d="M.5 3.500h2l3-2.500v8l-3-2.500h-2zM7 3.500q1 1.500 0 3M9 2q2 3 0 6M10.500 .5q3 4 0 9" stroke="#fff" strokeWidth=".9" />
          </Svg>
        </IconButton>
        <IconButton label="网络" className="w-4">
          <Svg w={12} h={10}>
            <path d="M4 1.500h7.500v6H4M6 9.500h4M.5 .5h3v3h-3zM2 3.500v6" stroke="#fff" />
          </Svg>
        </IconButton>
        <button className="w-4">英</button>
        <IconButton label="输入法" className="w-[22px]">
          <Svg w={10} h={10}>
            <rect width="10" height="10" rx="1" fill="#fff" stroke="none" />
            <path d="m3 5 1.500 2L8.500 2M0 7.500 3 10" stroke="#182947" strokeWidth="1.200" />
          </Svg>
        </IconButton>
        <time className="w-[50px] text-center text-[8px] leading-[12px]">
          21:19
          <br />
          2024/5/31
        </time>
        <IconButton label="通知" className="ml-[3px] mr-[12px] w-[20px]">
          <Svg w={12} h={12}>
            <path d="M.5 1.500h11v8H8L6 11.500l-2-2H.5z" stroke="#fff" />
          </Svg>
        </IconButton>
      </div>
    </div>
  );
}

/* ── Things floating over the window ─────────── */

function TimerBadge() {
  return (
    <div className="absolute left-[3px] top-[247px] flex h-[49px] w-7 flex-col items-center justify-center gap-[3px] rounded-full bg-[#1d232c] text-white">
      <LeafIcon w={14} h={18} />
      <span className="text-[8px] font-bold leading-[12px]">29:43</span>
    </div>
  );
}

function ImeBar() {
  return (
    <div className="absolute bottom-[28px] left-[683px] flex h-[18px] w-[88px] items-center justify-around border border-[#c3d3e8] bg-[#fbfcfe] px-[2px] text-[10px] font-bold leading-none text-[#2f74e8]">
      <Svg w={11} h={11}>
        <rect x=".5" y=".5" width="10" height="10" rx="1" stroke="#2f74e8" />
        <path d="M0 6.500 4.500 11H0z" fill="#2f74e8" stroke="none" />
        <path d="m4 5 1.500 2L9 2.500" stroke="#2f74e8" strokeWidth="1.200" />
      </Svg>
      英
      <Svg w={9} h={9}>
        <path d="M6 0c5 4 1 10-6 8C4 7.500 6.500 4 6 0z" fill="#2f74e8" stroke="none" />
      </Svg>
      <Svg w={8} h={9}>
        <circle cx="2" cy="2" r="1.200" fill="#2f74e8" stroke="none" />
        <circle cx="5.500" cy="5" r="1.400" fill="#2f74e8" stroke="none" />
        <path d="M6.500 5q0 2-1.500 3" stroke="#2f74e8" />
      </Svg>
      <Svg w={10} h={10}>
        <circle cx="5" cy="5" r="2.800" stroke="#2f74e8" strokeWidth="1.400" />
        <path d="M5 0v2M5 8v2M0 5h2M8 5h2M1.500 1.500 3 3M7 7l1.500 1.500M8.500 1.500 7 3M3 7 1.500 8.500" stroke="#2f74e8" />
      </Svg>
    </div>
  );
}

function ActivationNote() {
  return (
    <div className="pointer-events-none absolute bottom-[59px] right-[59px] w-[134px] whitespace-nowrap text-[#a9a9a9]">
      <p className="text-[14px] leading-[18px]">激活 Windows</p>
      <p className="text-[10px] leading-[14px]">转到"设置"以激活 Windows。</p>
    </div>
  );
}

export default function App() {
  return (
    <div className={`relative flex h-screen flex-col overflow-hidden bg-[#ececec] text-[#333] ${UI_FONT}`}>
      <TitleBar />
      <TabBar />
      <Ribbon />
      <FormulaBar />
      <Grid />
      <SheetBar />
      <StatusBar />
      <Taskbar />
      <TimerBadge />
      <ImeBar />
      <ActivationNote />
    </div>
  );
}
